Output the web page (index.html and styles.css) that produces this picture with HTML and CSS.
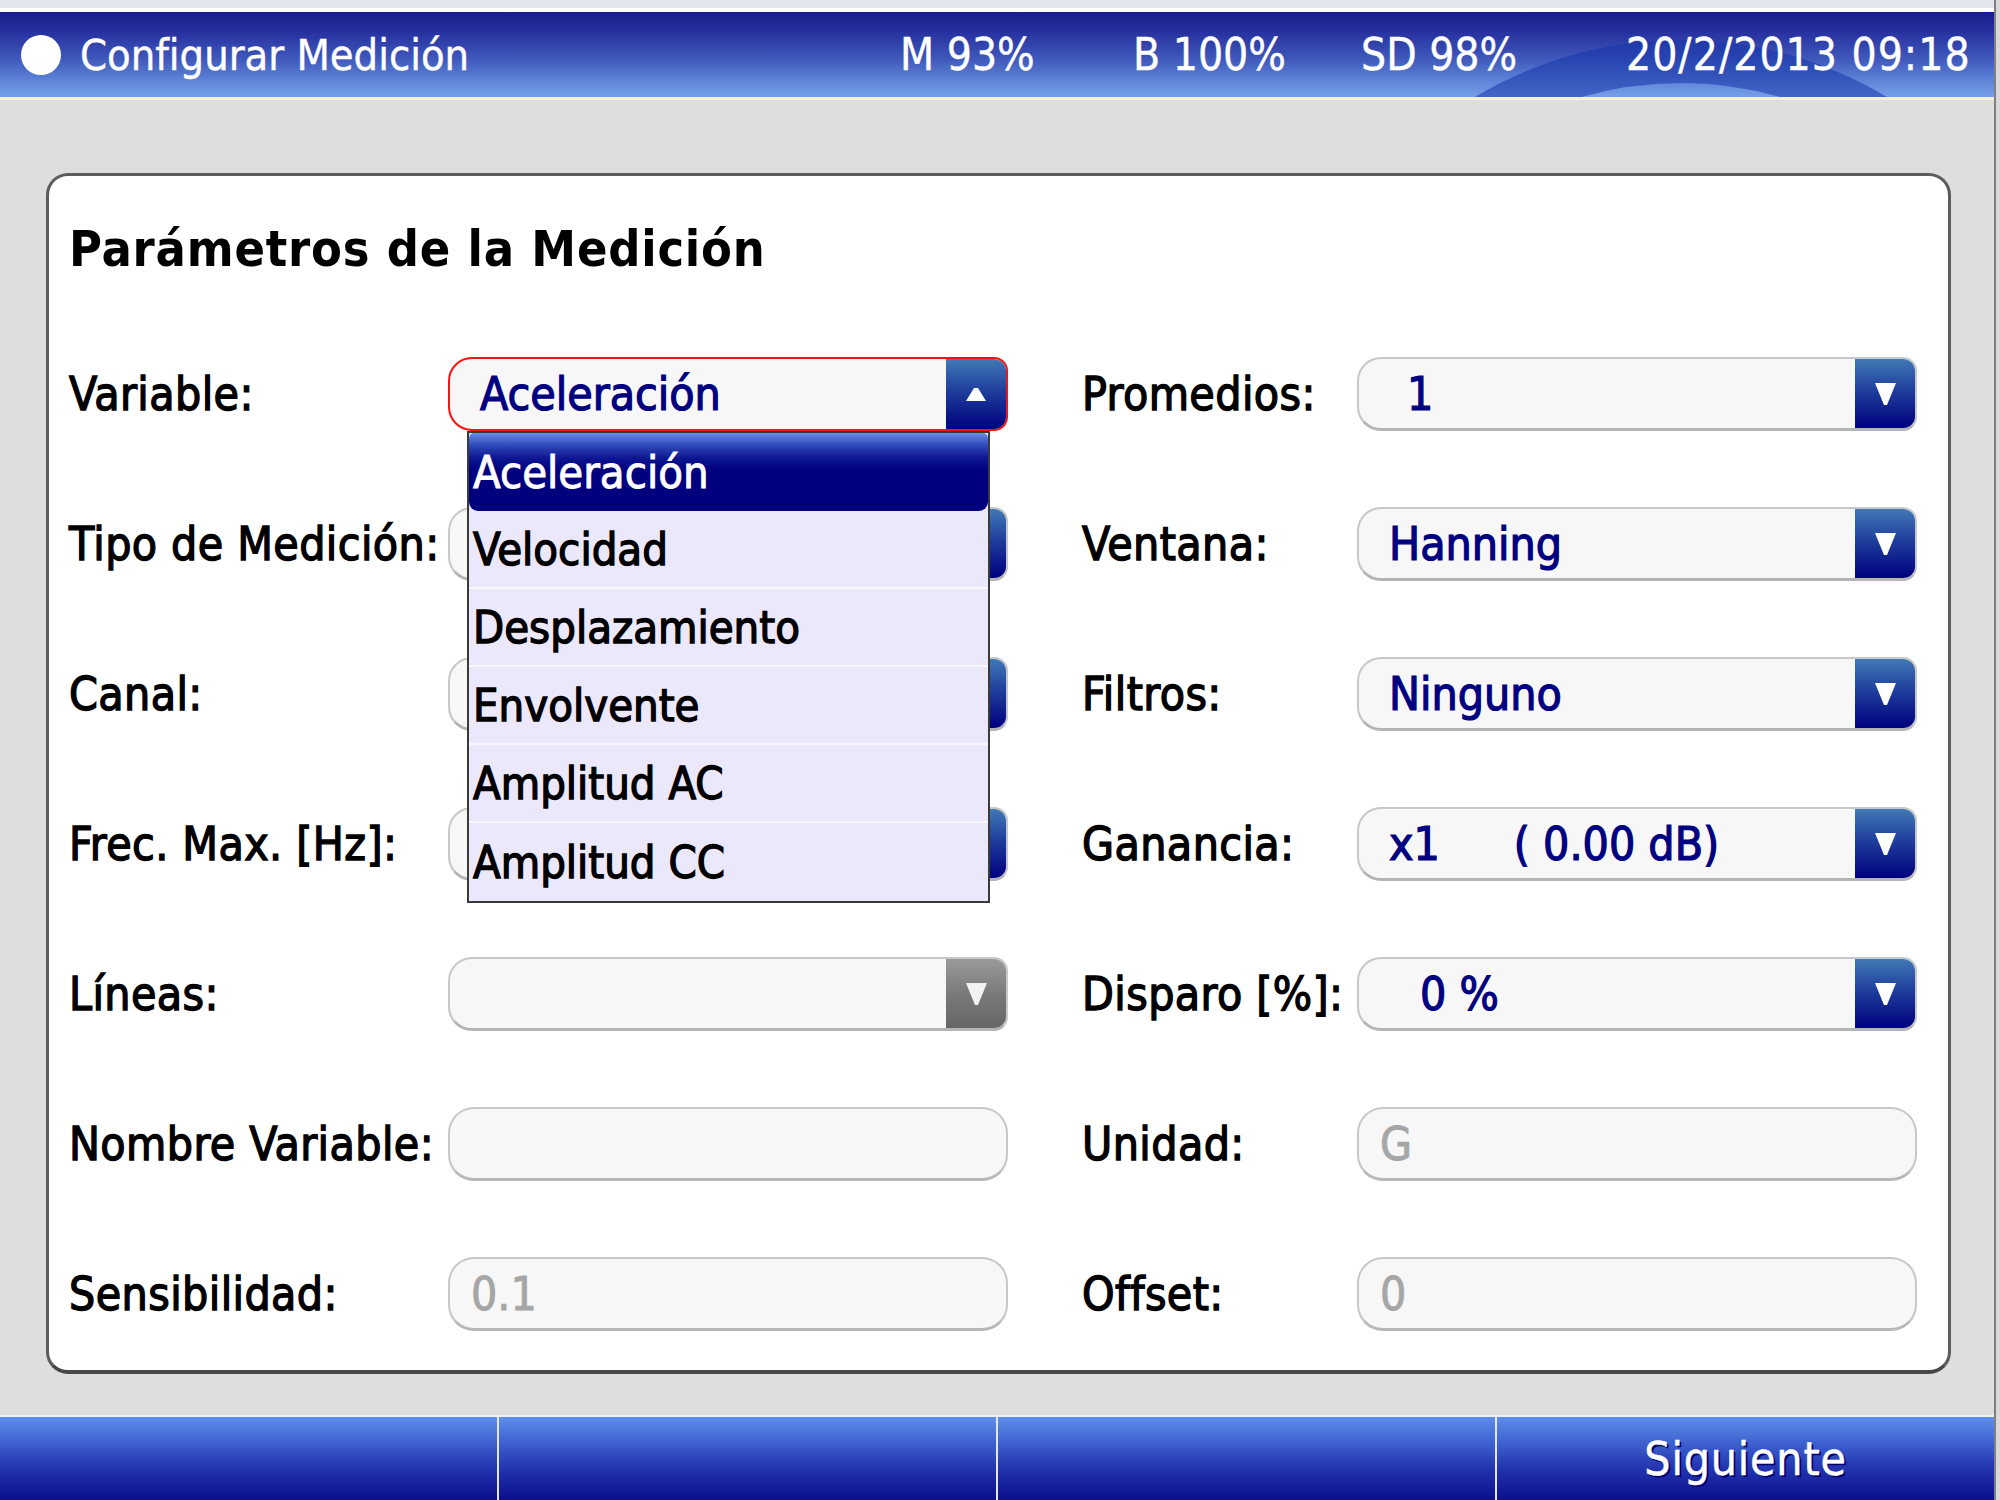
FILE: index.html
```html
<!DOCTYPE html>
<html lang="es">
<head>
<meta charset="utf-8">
<title>Configurar Medición</title>
<link rel="stylesheet" href="styles.css">
</head>
<body>
<div class="screen">
  <div class="topstrip"></div>
  <header class="hdr">
    <div class="brand"><span class="dot"></span><span class="hdr-title">Configurar Medición</span></div>
    <span class="stat s-m">M 93%</span>
    <span class="stat s-b">B 100%</span>
    <span class="stat s-sd">SD 98%</span>
    <span class="stat s-date">20/2/2013 09:18</span>
  </header>
  <main class="main">
    <section class="panel">
      <h1 class="title">Parámetros de la Medición</h1>
      <div class="form">
        <div class="label">Variable:</div>
        <div class="field">
          <div class="select active"><span class="val">Aceleración</span><span class="btn"><svg class="tri-up" width="20" height="13" viewBox="0 0 20 13"><polygon points="8,0 12,0 20,13 0,13" fill="#fff"/></svg></span></div>
          <ul class="menu">
            <li class="item sel">Aceleración</li>
            <li class="item">Velocidad</li>
            <li class="item">Desplazamiento</li>
            <li class="item">Envolvente</li>
            <li class="item">Amplitud AC</li>
            <li class="item">Amplitud CC</li>
          </ul>
        </div>
        <div class="label r">Promedios:</div>
        <div class="field"><div class="select"><span class="val v-num">1</span><span class="btn"><svg width="21" height="22" viewBox="0 0 21 22"><polygon points="0,0 21,0 12,22 9,22" fill="#fff"/></svg></span></div></div>

        <div class="label">Tipo de Medición:</div>
        <div class="field"><div class="select"><span class="val"></span><span class="btn"><svg width="21" height="22" viewBox="0 0 21 22"><polygon points="0,0 21,0 12,22 9,22" fill="#fff"/></svg></span></div></div>
        <div class="label r">Ventana:</div>
        <div class="field"><div class="select"><span class="val">Hanning</span><span class="btn"><svg width="21" height="22" viewBox="0 0 21 22"><polygon points="0,0 21,0 12,22 9,22" fill="#fff"/></svg></span></div></div>

        <div class="label">Canal:</div>
        <div class="field"><div class="select"><span class="val"></span><span class="btn"><svg width="21" height="22" viewBox="0 0 21 22"><polygon points="0,0 21,0 12,22 9,22" fill="#fff"/></svg></span></div></div>
        <div class="label r">Filtros:</div>
        <div class="field"><div class="select"><span class="val">Ninguno</span><span class="btn"><svg width="21" height="22" viewBox="0 0 21 22"><polygon points="0,0 21,0 12,22 9,22" fill="#fff"/></svg></span></div></div>

        <div class="label">Frec. Max. [Hz]:</div>
        <div class="field"><div class="select"><span class="val"></span><span class="btn"><svg width="21" height="22" viewBox="0 0 21 22"><polygon points="0,0 21,0 12,22 9,22" fill="#fff"/></svg></span></div></div>
        <div class="label r">Ganancia:</div>
        <div class="field"><div class="select"><span class="val">x1<span class="gain-db">( 0.00 dB)</span></span><span class="btn"><svg width="21" height="22" viewBox="0 0 21 22"><polygon points="0,0 21,0 12,22 9,22" fill="#fff"/></svg></span></div></div>

        <div class="label">Líneas:</div>
        <div class="field"><div class="select disabled"><span class="val"></span><span class="btn"><svg width="21" height="22" viewBox="0 0 21 22"><polygon points="0,0 21,0 12,22 9,22" fill="#f2f2f2"/></svg></span></div></div>
        <div class="label r">Disparo [%]:</div>
        <div class="field"><div class="select"><span class="val v-pct">0 %</span><span class="btn"><svg width="21" height="22" viewBox="0 0 21 22"><polygon points="0,0 21,0 12,22 9,22" fill="#fff"/></svg></span></div></div>

        <div class="label">Nombre Variable:</div>
        <div class="field"><div class="input"></div></div>
        <div class="label r">Unidad:</div>
        <div class="field"><div class="input">G</div></div>

        <div class="label">Sensibilidad:</div>
        <div class="field"><div class="input">0.1</div></div>
        <div class="label r">Offset:</div>
        <div class="field"><div class="input">0</div></div>
      </div>
    </section>
  </main>
  <footer class="bar">
    <div class="key"></div>
    <div class="key"></div>
    <div class="key"></div>
    <div class="key">Siguiente</div>
  </footer>
</div>
</body>
</html>
```

FILE: styles.css
```css
html, body {
  margin: 0;
  padding: 0;
}
body {
  width: 2000px;
  height: 1500px;
  overflow: hidden;
  background: #d9d9d9;
  font-family: "DejaVu Sans Condensed", "DejaVu Sans", sans-serif;
  font-stretch: condensed;
}
.screen {
  width: 1994px;
  height: 1500px;
  border-right: 2px solid #808080;
  display: flex;
  flex-direction: column;
  background: #dedede;
}
.topstrip {
  height: 12px;
  flex: none;
  background: linear-gradient(#e2e4ee 0, #e2e4ee 65%, #ffffff 65%, #ffffff 100%);
}
.hdr {
  position: relative;
  overflow: hidden;
  flex: none;
  height: 85px;
  border-bottom: 3px solid #f3efe2;
  display: flex;
  align-items: center;
  padding-left: 21px;
  color: #fff;
  background: linear-gradient(#1a1d8c 0%, #262f9e 22%, #3f58bb 55%, #5f86d9 82%, #76a0e8 100%);
}
.hdr::after {
  content: "";
  position: absolute;
  left: 1280px;
  top: 28px;
  width: 716px;
  height: 716px;
  border: 43px solid rgba(22, 52, 170, 0.55);
  border-radius: 50%;
}
.brand {
  position: relative;
  z-index: 1;
  width: 879px;
  display: flex;
  align-items: center;
  gap: 19px;
}
.dot {
  width: 40px;
  height: 40px;
  border-radius: 50%;
  background: #fff;
}
.hdr-title {
  font-size: 43px;
  -webkit-text-stroke: 0.4px #fff;
}
.stat {
  position: relative;
  z-index: 1;
  font-size: 44px;
  white-space: nowrap;
  -webkit-text-stroke: 0.4px #fff;
}
.s-m { width: 233px; }
.s-b { width: 228px; }
.s-sd { width: 265px; }
.s-date { letter-spacing: 1px; }

.main {
  flex: 1;
  padding: 73px 43px 41px 46px;
  display: flex;
}
.panel {
  flex: 1;
  box-sizing: border-box;
  background: #fff;
  border: 3px solid #5c5c5c;
  border-bottom: 4px solid #474747;
  border-radius: 22px;
  padding: 43px 29px 0 20px;
}
.title {
  margin: 0;
  font-size: 50px;
  line-height: 60px;
  font-weight: bold;
  color: #000;
  letter-spacing: 0.8px;
}
.form {
  margin-top: 78px;
  display: grid;
  grid-template-columns: 379px 560px 349px 560px;
  grid-auto-rows: 74px;
  row-gap: 76px;
  align-items: center;
}
.label {
  font-size: 46px;
  color: #000;
  white-space: nowrap;
  letter-spacing: 0.4px;
  -webkit-text-stroke: 1.3px #000;
}
.label.r {
  padding-left: 74px;
}
.field {
  position: relative;
  height: 74px;
}
.select {
  box-sizing: border-box;
  height: 74px;
  display: flex;
  align-items: stretch;
  background: #f7f7f7;
  border: 2px solid #c8c8c8;
  border-bottom: 3px solid #b4b4b4;
  border-radius: 24px 14px 14px 24px;
  overflow: hidden;
}
.select.active {
  border: 2px solid #ff1010;
}
.val {
  flex: 1;
  display: flex;
  align-items: center;
  padding-left: 30px;
  font-size: 46px;
  color: #000080;
  white-space: pre;
  -webkit-text-stroke: 1.2px #000080;
}
.v-num { padding-left: 48px; }
.v-pct { padding-left: 61px; }
.gain-db { margin-left: 74px; }
.btn {
  width: 60px;
  flex: none;
  display: flex;
  align-items: center;
  justify-content: center;
  background: linear-gradient(#4179b5 0%, #1f3f9c 45%, #00007e 100%);
}
.select.disabled .btn {
  background: linear-gradient(#9a9a9a 0%, #7a7a7a 50%, #666666 100%);
}
.input {
  box-sizing: border-box;
  height: 74px;
  display: flex;
  align-items: center;
  padding-left: 21px;
  background: #f7f7f7;
  border: 2px solid #c8c8c8;
  border-bottom: 3px solid #b8b8b8;
  border-radius: 26px;
  font-size: 46px;
  color: #a6a6a6;
  -webkit-text-stroke: 0.9px #a6a6a6;
}
.menu {
  position: absolute;
  z-index: 10;
  left: 19px;
  top: 74px;
  width: 523px;
  box-sizing: border-box;
  margin: 0;
  padding: 0;
  list-style: none;
  border: 2px solid #3a3a3a;
  background: #ece8fc;
}
.item {
  box-sizing: border-box;
  height: 78px;
  display: flex;
  align-items: center;
  padding-left: 4px;
  font-size: 45px;
  color: #000;
  border-bottom: 2px solid #f8f6ff;
  -webkit-text-stroke: 1.3px #000;
}
.item:last-child {
  border-bottom: 0;
}
.item.sel {
  color: #fff;
  -webkit-text-stroke: 0.9px #fff;
  border-bottom: 0;
  border-radius: 5px 5px 9px 9px;
  background: linear-gradient(#6a8ee4 0%, #3450bf 14%, #0e1690 32%, #00007e 48%, #00007e 100%);
}

.bar {
  flex: none;
  height: 85px;
  box-sizing: border-box;
  border-top: 2px solid #eef0fa;
  display: flex;
}
.key {
  flex: 1;
  display: flex;
  align-items: center;
  justify-content: center;
  background: linear-gradient(#5e8fea 0%, #3f63d0 30%, #2436b0 60%, #0b0f8c 100%);
  color: #fff;
  font-size: 46px;
  letter-spacing: 0.8px;
  -webkit-text-stroke: 0.5px #fff;
  text-shadow: 2px 2px 0 #000070;
}
.key + .key {
  border-left: 2px solid #e2e6f6;
}
```
